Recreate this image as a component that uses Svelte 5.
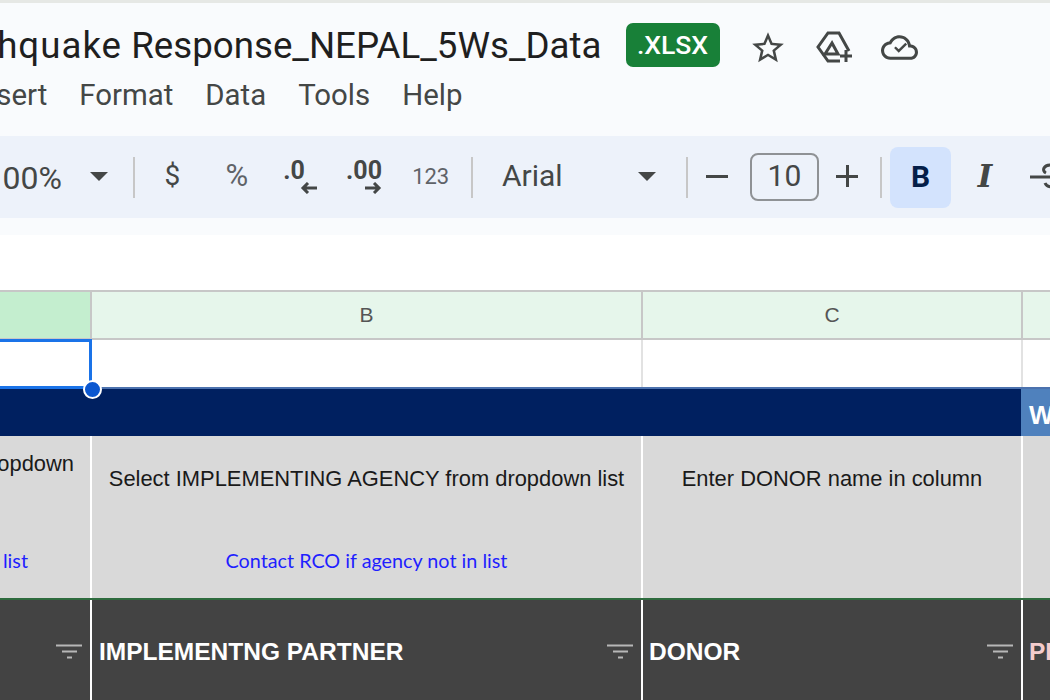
<script>
  const menu = ['Insert', 'Format', 'Data', 'Tools', 'Help']
</script>

<div class="page">
  <div class="topline"></div>

  <header class="docbar">
    <div class="titlerow">
      <span class="title"><span class="first-word">Earthquake</span> Response_NEPAL_5Ws_Data</span>
      <span class="badge">.XLSX</span>
      <svg class="star" viewBox="0 0 24 24" width="38" height="38"><path d="M22 9.24l-7.19-.62L12 2 9.19 8.63 2 9.24l5.46 4.73L5.82 21 12 17.27 18.18 21l-1.63-7.03L22 9.24zM12 15.4l-3.76 2.27 1-4.28-3.32-2.88 4.38-.38L12 6.1l1.71 4.04 4.38.38-3.32 2.88 1 4.28L12 15.4z"/></svg>
      <svg class="drive" viewBox="0 0 44 40" width="44" height="40" fill="none" stroke="#444746" stroke-width="3"><path d="M27 34H15L5 20 15 6h11l10 18"/><path d="M19 16l-7 11h13z"/><path d="M33 23v12M27 29h12"/></svg>
      <svg class="cloud" viewBox="0 0 24 24" width="37" height="37"><path d="M19.35 10.04C18.67 6.59 15.64 4 12 4 9.11 4 6.6 5.64 5.35 8.04 2.34 8.36 0 10.91 0 14c0 3.31 2.69 6 6 6h13c2.76 0 5-2.24 5-5 0-2.64-2.05-4.78-4.65-4.96zM19 18H6c-2.21 0-4-1.79-4-4 0-2.05 1.53-3.76 3.56-3.97l1.07-.11.5-.95C8.08 7.14 9.94 6 12 6c2.62 0 4.88 1.86 5.39 4.43l.3 1.5 1.53.11c1.56.1 2.78 1.41 2.78 2.96 0 1.65-1.35 3-3 3zm-7.5-2.6l-3-3 1.1-1.1 1.9 1.9 4.3-4.3 1.1 1.1z"/></svg>
    </div>
    <nav class="menu">
      {#each menu as m}<span>{m}</span>{/each}
    </nav>
  </header>

  <div class="toolbar">
    <div class="zoom">100%</div>
    <svg class="caret caret-zoom" viewBox="0 0 18 9" width="18" height="9"><path d="M0 0h18L9 9z"/></svg>
    <i class="sep sep-a"></i>
    <div class="tool sym sym-first">$</div>
    <div class="tool pct">%</div>
    <div class="tool dec dec-less">
      <span>.0</span>
      <svg viewBox="0 0 18 12" width="18" height="12"><path d="M17 6H3M8 1L3 6l5 5" fill="none" stroke="#444746" stroke-width="3"/></svg>
    </div>
    <div class="tool dec dec-more">
      <span>.00</span>
      <svg viewBox="0 0 18 12" width="18" height="12"><path d="M1 6h14M10 1l5 5-5 5" fill="none" stroke="#444746" stroke-width="3"/></svg>
    </div>
    <div class="tool num">123</div>
    <i class="sep sep-b"></i>
    <div class="font">Arial</div>
    <svg class="caret" viewBox="0 0 18 9" width="18" height="9"><path d="M0 0h18L9 9z"/></svg>
    <i class="sep sep-c"></i>
    <div class="step step-minus"><b></b></div>
    <div class="size">10</div>
    <div class="step step-plus"><b></b><b class="vert"></b></div>
    <i class="sep sep-d"></i>
    <div class="bold">B</div>
    <div class="ital">I</div>
    <svg class="strike" viewBox="0 0 40 34" width="40" height="34" fill="none" stroke="#444746" stroke-width="3"><path d="M1 16h38"/><path d="M27 6c-2-3-10-3-12 1-1 2 0 4 2 5M16 22c2 5 11 5 13 0"/></svg>
  </div>

  <div class="gap"></div>

  <section class="sheet">
    <div class="row colhead">
      <div class="cell picked"></div>
      <div class="cell">B</div>
      <div class="cell">C</div>
      <div class="cell"></div>
    </div>

    <div class="row blank">
      <div class="cell active">
        <span class="handle"></span>
      </div>
      <div class="cell"></div>
      <div class="cell"></div>
      <div class="cell"></div>
    </div>

    <div class="row band">
      <div class="navy"></div>
      <div class="what">WHAT</div>
    </div>

    <div class="row notes">
      <div class="cell first">
        <p class="hint">Select from dropdown</p>
        <p class="contact">Contact RCO if not in list</p>
      </div>
      <div class="cell">
        <p class="hint">Select IMPLEMENTING AGENCY from dropdown list</p>
        <p class="contact">Contact RCO if agency not in list</p>
      </div>
      <div class="cell">
        <p class="hint">Enter DONOR name in column</p>
      </div>
      <div class="cell"></div>
    </div>

    <div class="row heads">
      {#each ['', 'IMPLEMENTNG PARTNER', 'DONOR', 'PROJECT'] as h, i}
        <div class="cell" class:pink={i === 3}>
          <span class="label">{h}</span>
          {#if i < 3}
            <svg class="filter" viewBox="0 0 26 16" width="26" height="16"><path d="M0 1.5h26M6 7.5h15M11 13.5h5" stroke="#b7b7b7" stroke-width="2"/></svg>
          {/if}
        </div>
      {/each}
    </div>
  </section>
</div>

<style>
  :global(body) {
    margin: 0;
    overflow: hidden;
    background: #fff;
  }

  .page {
    width: 1050px;
    height: 700px;
    overflow: hidden;
    display: flex;
    flex-direction: column;
    font-family: Roboto, sans-serif;
  }

  .topline {
    height: 3px;
    background: #e6e8e5;
    flex-shrink: 0;
  }

  /* ── Doc header ── */
  .docbar {
    height: 133px;
    background: #f9fbfd;
    flex-shrink: 0;
  }

  .titlerow {
    display: flex;
    align-items: center;
    height: 64px;
    padding-top: 20px;
    box-sizing: border-box;
    white-space: nowrap;
  }

  .title {
    flex-shrink: 0;
    margin-left: -73px;
    font-size: 36.7px;
    color: #1f1f1f;
  }
  .first-word { letter-spacing: 1px; }

  .badge {
    flex-shrink: 0;
    margin-left: 24px;
    width: 94px;
    height: 44px;
    line-height: 44px;
    text-align: center;
    background: #188038;
    border-radius: 7px;
    color: #fff;
    font-size: 26.5px;
    font-weight: 500;
  }

  .titlerow svg { flex-shrink: 0; fill: #444746; }
  .titlerow .drive { fill: none; }
  .star  { margin-left: 29px; margin-top: 6px; }
  .drive { margin-left: 26px; margin-top: 3px; }
  .cloud { margin-left: 24px; margin-top: 4px; }

  .menu {
    display: flex;
    gap: 32px;
    margin-top: 10px;
    margin-left: -28px;
    font-size: 29.4px;
    line-height: 36px;
    color: #444746;
    white-space: nowrap;
  }

  /* ── Toolbar ── */
  .toolbar {
    height: 82px;
    background: #edf2fa;
    display: flex;
    align-items: center;
    flex-shrink: 0;
    color: #444746;
    white-space: nowrap;
  }

  .toolbar > * { flex-shrink: 0; }

  .zoom {
    width: 62px;
    display: flex;
    justify-content: flex-end;
    font-size: 32px;
    margin-top: 2px;
  }

  .caret { fill: #444746; margin-top: -2px; }
  .caret-zoom { margin-left: 28px; }

  .sep {
    width: 2px;
    height: 41px;
    background: #c7c7c7;
  }
  .sep-a { margin-left: 25px; }
  .sep-b { margin-left: 8px; }
  .sep-c { margin-left: 30px; }
  .sep-d { margin-left: 5px; }

  .tool {
    width: 64.6px;
    text-align: center;
    position: relative;
  }
  .sym { font-size: 28px; margin-top: -4px; }
  .sym-first { margin-left: 5px; }
  .pct { font-size: 31px; margin-top: -4px; color: #5f6368; }
  .num { font-size: 22px; margin-top: -2px; color: #5f6368; }

  .dec {
    display: flex;
    flex-direction: column;
    align-items: center;
    font-size: 25px;
    font-weight: 700;
    line-height: 20px;
  }
  .dec svg { margin-top: 1px; }
  .dec-less span { margin-left: -15px; }
  .dec-less svg { margin-left: 16px; }
  .dec-more span { margin-left: -4px; }
  .dec-more svg { margin-left: 14px; }

  .font {
    margin-left: 1px;
    width: 136px;
    padding-left: 28px;
    font-size: 30px;
    margin-top: -4px;
  }

  .step {
    width: 58px;
    height: 40px;
    position: relative;
  }
  .step b {
    position: absolute;
    left: 18px;
    top: 18px;
    width: 22px;
    height: 3px;
    background: #444746;
  }
  .step-plus { width: 56px; }
  .step-plus b { left: 17px; }
  .step b.vert {
    left: 27px;
    top: 8px;
    width: 3px;
    height: 22px;
  }

  .size {
    margin-left: 4px;
    width: 69px;
    height: 48px;
    box-sizing: border-box;
    border: 2px solid #8f9295;
    border-radius: 8px;
    text-align: center;
    line-height: 42px;
    font-size: 30px;
  }

  .bold {
    margin-left: 8px;
    width: 61px;
    height: 61px;
    border-radius: 8px;
    background: #d3e3fd;
    color: #041e49;
    text-align: center;
    line-height: 60px;
    font-size: 30px;
    font-weight: 700;
  }

  .ital {
    width: 68px;
    text-align: center;
    font-family: "DejaVu Serif", serif;
    font-style: italic;
    font-weight: 700;
    font-size: 31px;
    margin-top: -2px;
  }

  .strike { margin-left: 10px; margin-top: 2px; }

  .gap {
    height: 17px;
    background: #f9fbfd;
    flex-shrink: 0;
  }

  /* ── Sheet ── */
  .sheet {
    margin-top: 55px;
    flex: 1;
    display: flex;
    flex-direction: column;
    font-family: "Liberation Sans", Arial, sans-serif;
  }

  .row {
    display: grid;
    grid-template-columns: 92px 551px 380px 1fr;
    flex-shrink: 0;
  }

  .cell {
    box-sizing: border-box;
    border-right: 2px solid transparent;
    min-width: 0;
  }
  .row .cell:last-child { border-right: none; }

  .colhead {
    height: 50px;
    border-top: 2px solid #c7c7c7;
    border-bottom: 2px solid #c7c7c7;
    box-sizing: border-box;
  }
  .colhead .cell {
    background: #e6f6eb;
    border-right-color: #c7c7c7;
    text-align: center;
    line-height: 46px;
    font-size: 21px;
    color: #555;
  }
  .colhead .cell.picked { background: #c4eecf; }

  .blank {
    height: 49px;
    box-sizing: border-box;
    border-bottom: 2px solid #4c72ae;
  }
  .blank .cell { border-right-color: #e2e2e2; }

  .active {
    position: relative;
    z-index: 1;
  }
  .active::after {
    content: "";
    position: absolute;
    left: -4px;
    right: -2px;
    top: -1px;
    bottom: -2px;
    border: 3px solid #1a73e8;
    pointer-events: none;
  }
  .handle {
    position: absolute;
    right: -12px;
    bottom: -12px;
    width: 19px;
    height: 19px;
    box-sizing: border-box;
    border: 2px solid #fff;
    border-radius: 50%;
    background: #0b57d0;
    z-index: 2;
  }

  .band {
    height: 47px;
    background: #002060;
  }
  .navy { grid-column: span 3; }
  .what {
    margin-left: -2px;
    background: #4f81bd;
    padding-left: 8px;
    color: #fff;
    font-size: 26px;
    font-weight: 700;
    line-height: 53px;
    overflow: hidden;
    white-space: nowrap;
  }

  .notes {
    height: 164px;
    box-sizing: border-box;
    background: #d9d9d9;
    border-bottom: 2px solid #2e6b3e;
  }
  .notes .cell {
    border-right-color: #fff;
    text-align: center;
    position: relative;
    white-space: nowrap;
  }
  .hint {
    margin: 29px 0 0;
    font-size: 21.9px;
    line-height: 28px;
    color: #1a1a1a;
  }
  .contact {
    margin: 53px 0 0;
    font-family: Lato, sans-serif;
    font-size: 19.8px;
    line-height: 28px;
    color: #1f1fff;
  }
  .first {
    display: flex;
    flex-direction: column;
    align-items: flex-end;
    padding-right: 16px;
    overflow: hidden;
  }
  .first .hint { margin-top: 14px; flex-shrink: 0; }
  .first .contact { margin-top: 68px; margin-right: 46px; flex-shrink: 0; }

  .heads {
    flex: 1;
    background: #434343;
  }
  .heads .cell {
    border-right-color: #fff;
    display: flex;
    align-items: center;
    justify-content: space-between;
    padding: 0 8px 0 7px;
    height: 100px;
    overflow: hidden;
    white-space: nowrap;
  }
  .heads .cell:nth-child(3) { padding-left: 6px; }
  .heads .cell:nth-child(4) { padding-left: 6px; }
  .label {
    margin-top: 4px;
    color: #fff;
    font-size: 24.5px;
    font-weight: 700;
  }
  .pink .label { color: #f4cccc; }
  .filter { flex-shrink: 0; margin-top: 4px; }
</style>
